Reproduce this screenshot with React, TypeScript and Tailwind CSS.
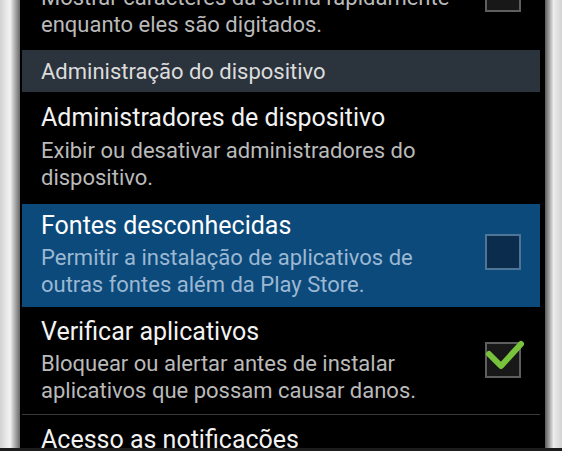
import React from "react";

type Row = {
    title: string;
    lines: string[];
    checked?: boolean;
    active?: boolean;
    cls: string;
    subCls: string;
    boxCls?: string;
};

function CheckBox({ checked, active, cls }: { checked?: boolean; active?: boolean; cls?: string }) {
    return (
        <div
            className={`relative w-[36px] h-[36px] shrink-0 border-2 ${
                active ? "border-[#4e7497] bg-[#0b2c4c]" : "border-[#5e5e5e] bg-[#181818]"
            } ${cls ?? ""}`}
        >
            {checked && (
                <svg
                    className="absolute -left-[2px] -top-[2px] overflow-visible"
                    width="36"
                    height="36"
                    viewBox="0 0 36 36"
                >
                    <path
                        d="M4 12 L16 24 L36 2"
                        fill="none"
                        stroke="#78c23c"
                        strokeWidth={6}
                        strokeLinecap="round"
                        strokeLinejoin="round"
                    />
                </svg>
            )}
        </div>
    );
}

function SettingRow({ row }: { row: Row }) {
    return (
        <div className={`flex items-start pl-[19px] pr-[19px] ${row.active ? "bg-[#0c4a7c]" : ""} ${row.cls}`}>
            <div className="flex-1">
                <div className={`text-[25px] leading-[30px] ${row.active ? "text-white" : "text-[#f2f2f2]"}`}>
                    {row.title}
                </div>
                <div
                    className={`text-[22px] leading-[27px] ${row.active ? "text-[#9bb8d3]" : "text-[#bababa]"} ${row.subCls}`}
                >
                    {row.lines.map((l) => (
                        <div key={l}>{l}</div>
                    ))}
                </div>
            </div>
            {row.checked !== undefined && (
                <CheckBox checked={row.checked} active={row.active} cls={row.boxCls} />
            )}
        </div>
    );
}

export default function App() {
    return (
        <div
            className="relative w-[562px] h-[451px] overflow-hidden flex bg-black"
            style={{ fontFamily: "Roboto, 'Noto Sans', sans-serif" }}
        >
            {/* Left bezel */}
            <div className="w-[20px] shrink-0 bg-gradient-to-r from-[#d2d2d2] via-[#f4f4f4] to-[#6a6a6a]" />

            {/* Screen */}
            <div className="flex-1 overflow-hidden pl-[2px] pr-[5px]">
                {/* Partly scrolled-away row */}
                <div className="-mt-[16px] flex items-start pl-[19px] pr-[19px] pb-[12px]">
                    <div className="flex-1 text-[22px] leading-[27px] text-[#bababa]">
                        <div>Mostrar caracteres da senha rapidamente</div>
                        <div>enquanto eles são digitados.</div>
                    </div>
                    <div className="relative w-[36px] h-[36px] -mt-[8px] shrink-0 border-2 border-[#5e5e5e] bg-[#181818]">
                        <div className="absolute left-[14px] top-[18px] w-[4px] h-[3px] bg-[#4b7f2a]" />
                    </div>
                </div>

                {/* Section header */}
                <div className="h-[42px] flex items-center pl-[19px] bg-[#2b333d] text-[22px] text-[#dcdcdc]">
                    Administração do dispositivo
                </div>

                <SettingRow
                    row={{
                        title: "Administradores de dispositivo",
                        lines: ["Exibir ou desativar administradores do", "dispositivo."],
                        cls: "pt-[11px] pb-[13px]",
                        subCls: "mt-[4px]",
                    }}
                />
                <SettingRow
                    row={{
                        title: "Fontes desconhecidas",
                        lines: ["Permitir a instalação de aplicativos de", "outras fontes além da Play Store."],
                        checked: false,
                        active: true,
                        cls: "pt-[7px] pb-[9px]",
                        subCls: "mt-[3px]",
                        boxCls: "mt-[23px]",
                    }}
                />
                <SettingRow
                    row={{
                        title: "Verificar aplicativos",
                        lines: ["Bloquear ou alertar antes de instalar", "aplicativos que possam causar danos."],
                        checked: true,
                        cls: "pt-[10px] pb-[10px]",
                        subCls: "mt-[3px]",
                        boxCls: "mt-[25px]",
                    }}
                />
                <div className="h-px bg-[#3a3a3a]" />
                <div className="pl-[19px] pt-[10px] text-[25px] leading-[30px] text-[#f2f2f2]">
                    Acesso as notificações
                </div>
            </div>

            {/* Right bezel */}
            <div className="w-[17px] shrink-0 bg-gradient-to-r from-[#5a5a5a] via-[#ececec] to-[#d4d4d4]" />

            {/* Bottom edge */}
            <div className="absolute left-0 right-0 bottom-0 h-[3px] bg-[#1c1c1c]" />
        </div>
    );
}
